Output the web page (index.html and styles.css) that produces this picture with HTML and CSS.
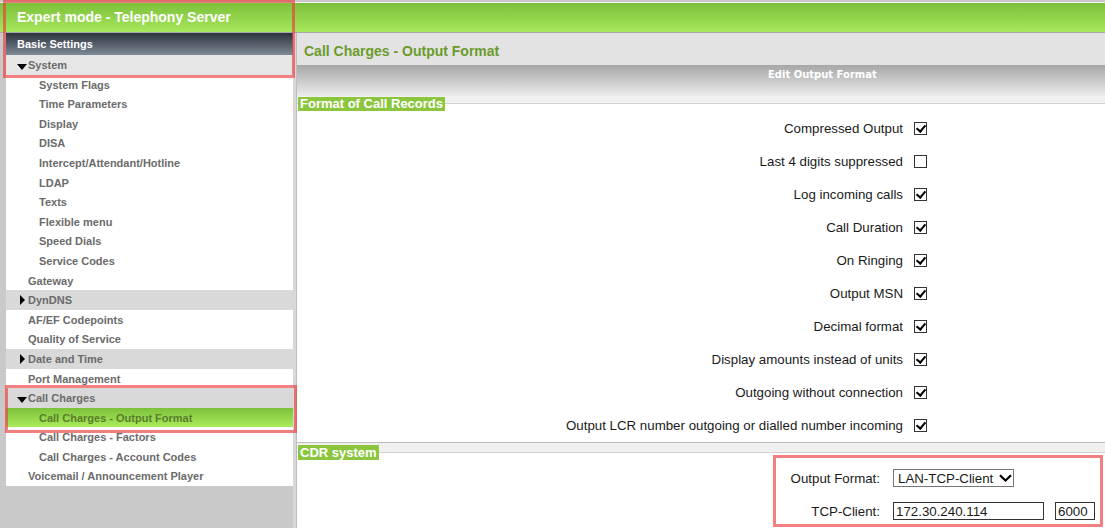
FILE: index.html
```html
<!DOCTYPE html>
<html lang="en">
<head>
    <meta charset="UTF-8">
    <title>Expert mode - Telephony Server</title>
    <link rel="stylesheet" href="styles.css">
</head>
<body>
    <div class="topbar">Expert mode - Telephony Server</div>

    <div class="layout">
        <div class="sidebar">
            <div class="nav-head">Basic Settings</div>
            <ul class="nav">
                <li class="group open light">System</li>
                <li class="sub">System Flags</li>
                <li class="sub">Time Parameters</li>
                <li class="sub">Display</li>
                <li class="sub">DISA</li>
                <li class="sub">Intercept/Attendant/Hotline</li>
                <li class="sub">LDAP</li>
                <li class="sub">Texts</li>
                <li class="sub">Flexible menu</li>
                <li class="sub">Speed Dials</li>
                <li class="sub">Service Codes</li>
                <li>Gateway</li>
                <li class="group closed">DynDNS</li>
                <li>AF/EF Codepoints</li>
                <li>Quality of Service</li>
                <li class="group closed">Date and Time</li>
                <li>Port Management</li>
                <li class="group open">Call Charges</li>
                <li class="sub active">Call Charges - Output Format</li>
                <li class="sub">Call Charges - Factors</li>
                <li class="sub">Call Charges - Account Codes</li>
                <li>Voicemail / Announcement Player</li>
            </ul>
        </div>
        <div class="splitter"></div>

        <div class="main">
            <div class="page-title">Call Charges - Output Format</div>
            <div class="form-head">Edit Output Format</div>

            <div class="legend-row"><span class="legend">Format of Call Records</span></div>
            <div class="opt-row"><label for="o1">Compressed Output</label><input type="checkbox" id="o1" checked></div>
            <div class="opt-row"><label for="o2">Last 4 digits suppressed</label><input type="checkbox" id="o2"></div>
            <div class="opt-row"><label for="o3">Log incoming calls</label><input type="checkbox" id="o3" checked></div>
            <div class="opt-row"><label for="o4">Call Duration</label><input type="checkbox" id="o4" checked></div>
            <div class="opt-row"><label for="o5">On Ringing</label><input type="checkbox" id="o5" checked></div>
            <div class="opt-row"><label for="o6">Output MSN</label><input type="checkbox" id="o6" checked></div>
            <div class="opt-row"><label for="o7">Decimal format</label><input type="checkbox" id="o7" checked></div>
            <div class="opt-row"><label for="o8">Display amounts instead of units</label><input type="checkbox" id="o8" checked></div>
            <div class="opt-row"><label for="o9">Outgoing without connection</label><input type="checkbox" id="o9" checked></div>
            <div class="opt-row"><label for="o10">Output LCR number outgoing or dialled number incoming</label><input type="checkbox" id="o10" checked></div>

            <div class="legend-row cdr-row"><span class="legend">CDR system</span></div>
            <div class="cdr-form">
                <label class="cdr-label" for="fmt">Output Format:</label>
                <span class="select-wrap">
                    <select id="fmt"><option>LAN-TCP-Client</option></select>
                    <svg class="chevron" width="13" height="8" viewBox="0 0 13 8"><path d="M1 1.2 L6.5 6.5 L12 1.2" fill="none" stroke="#000" stroke-width="2.2"/></svg>
                </span>
                <label class="cdr-label" for="ip">TCP-Client:</label>
                <span class="tcp">
                    <input type="text" id="ip" class="ip" value="172.30.240.114">
                    <input type="text" class="port" value="6000">
                </span>
            </div>
        </div>
    </div>

    <!-- highlight boxes from the screenshot -->
    <div class="mark mark-head"></div>
    <div class="mark mark-nav"></div>
    <div class="mark mark-cdr"></div>
</body>
</html>
```

FILE: styles.css
```css
body {
    margin: 0;
    background-color: #c9c9c9;
    font-family: "Liberation Sans", Arial, sans-serif;
}
.topbar {
    margin-top: 2px;
    height: 29px;
    border-top: 1px solid #f2f2f2;
    border-bottom: 1px solid #a8a8a8;
    background: linear-gradient(#7cc03a, #a7e75b);
    color: #fff;
    font-size: 14px;
    font-weight: bold;
    line-height: 29px;
    padding-left: 17px;
}
.layout {
    display: flex;
    align-items: flex-start;
}
.sidebar {
    flex: none;
    width: 287px;
    margin-left: 6px;
}
.splitter {
    flex: none;
    width: 3px;
    align-self: stretch;
    background-color: #d8d8d8;
}
.main {
    flex: 1;
    background-color: #fff;
    border-left: 1px solid #bdbdbd;
    border-bottom: 1px solid #bdbdbd;
}

/* navigation */
.nav-head {
    height: 22px;
    line-height: 22px;
    padding-left: 11px;
    color: #fff;
    font-size: 11px;
    font-weight: bold;
    background: linear-gradient(#2c333d, #7d8996);
}
.nav {
    list-style: none;
    margin: 0;
    padding: 0;
    background-color: #fff;
}
.nav li {
    height: 19.6px;
    line-height: 20px;
    padding-left: 22px;
    font-size: 11px;
    font-weight: bold;
    color: #6b6b6b;
    white-space: nowrap;
}
.nav .sub {
    padding-left: 33px;
}
.nav .group {
    padding-left: 11px;
    background-color: #d9d9d9;
}
.nav .group.light {
    background-color: #e6e6e6;
}
.nav .group::before {
    content: '';
    display: inline-block;
    vertical-align: -1px;
}
.nav .open::before {
    border-left: 5px solid transparent;
    border-right: 5px solid transparent;
    border-top: 6px solid #000;
    margin-right: 1px;
}
.nav .closed::before {
    border-top: 5px solid transparent;
    border-bottom: 5px solid transparent;
    border-left: 5px solid #000;
    margin: 0 3px;
}
.nav .active {
    background: linear-gradient(#7cc13a, #a9eb5b);
    color: #5a7c2c;
}

/* page head */
.page-title {
    height: 32px;
    box-sizing: border-box;
    padding: 4px 0 0 7px;
    line-height: 28px;
    background-color: #e3e3e3;
    color: #6b9b2b;
    font-size: 14px;
    font-weight: bold;
}
.form-head {
    height: 31px;
    box-sizing: border-box;
    padding: 3px 0 0 471px;
    line-height: 14px;
    background: linear-gradient(#a6a6a6, #ececec);
    color: #fff;
    font-family: "DejaVu Sans", Verdana, sans-serif;
    font-size: 10px;
    font-weight: bold;
}
.legend-row {
    display: flex;
    align-items: flex-start;
    height: 15px;
    padding-top: 1px;
    background: linear-gradient(#f0f0f0 0, #f0f0f0 7px, #d2d2d2 7px, #d2d2d2 8px, #fff 8px);
}
.legend {
    margin-left: 1px;
    padding: 0 2px;
    height: 14px;
    line-height: 14px;
    background-color: #8cc63f;
    color: #fff;
    font-size: 13px;
    font-weight: bold;
}
.cdr-row {
    height: 16px;
    padding-top: 2px;
    border-top: 1px solid #bdbdbd;
    background: linear-gradient(#f0f0f0 0, #f0f0f0 9px, #d2d2d2 9px, #d2d2d2 10px, #fff 10px);
}
.cdr-row .legend {
    height: 15px;
    line-height: 15px;
}

/* options */
.opt-row {
    height: 33px;
    display: flex;
    align-items: center;
    justify-content: flex-end;
    gap: 11px;
    padding-right: 178px;
    font-size: 13.3px;
    color: #1a1a1a;
}
.opt-row input {
    appearance: none;
    position: relative;
    width: 13px;
    height: 13px;
    margin: 0;
    border: 1px solid #333;
    background-color: #fff;
}
.opt-row input:checked::after {
    content: '';
    position: absolute;
    left: 3px;
    top: 0;
    width: 4px;
    height: 7px;
    border: solid #000;
    border-width: 0 2px 2px 0;
    transform: rotate(40deg);
}

/* CDR */
.cdr-form {
    height: 67px;
    box-sizing: border-box;
    display: grid;
    grid-template-columns: auto 202px;
    justify-content: end;
    align-content: start;
    align-items: center;
    column-gap: 13px;
    row-gap: 15px;
    padding: 8px 10px 0 0;
    font-size: 13.3px;
    color: #1a1a1a;
}
.cdr-label {
    justify-self: end;
}
.select-wrap {
    position: relative;
    width: 121px;
    height: 18px;
}
.select-wrap select {
    appearance: none;
    width: 121px;
    height: 18px;
    margin: 0;
    padding: 0 0 0 4px;
    border: 1px solid #767676;
    border-radius: 0;
    background-color: #fff;
    font-family: inherit;
    font-size: 13.3px;
    color: #1a1a1a;
}
.chevron {
    position: absolute;
    left: 106px;
    top: 5px;
}
.tcp {
    display: flex;
    gap: 11px;
}
.tcp input {
    box-sizing: border-box;
    height: 18px;
    margin: 0;
    padding: 0 2px;
    border: 1px solid #333;
    font-family: inherit;
    font-size: 13.3px;
    color: #1a1a1a;
}
.tcp .ip {
    width: 151px;
}
.tcp .port {
    width: 40px;
}

/* red highlight boxes */
.mark {
    position: absolute;
    box-sizing: border-box;
    border: 3px solid rgba(235, 60, 60, 0.65);
}
.mark-head {
    left: 3px;
    top: 0;
    width: 292px;
    height: 78px;
}
.mark-nav {
    left: 5px;
    top: 385px;
    width: 292px;
    height: 48px;
}
.mark-cdr {
    left: 773px;
    top: 455px;
    width: 330px;
    height: 72px;
}
```
